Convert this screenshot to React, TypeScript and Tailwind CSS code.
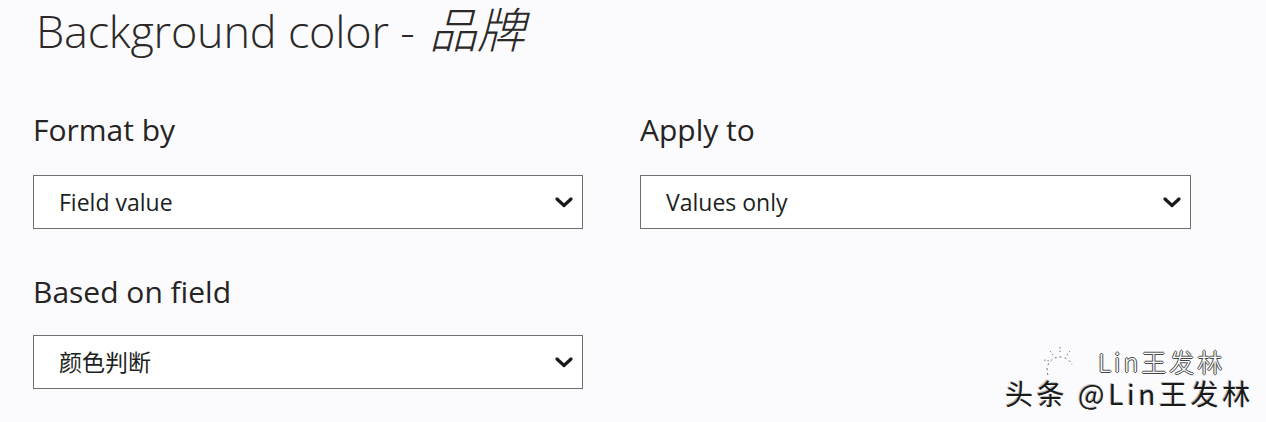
import React from "react";

function Chevron() {
  return (
    <svg width="18" height="11" viewBox="0 0 18 11" className="shrink-0">
      <polyline points="2,2 9,8.5 16,2" fill="none" stroke="#1b1a19" strokeWidth="3.2" strokeLinecap="round" strokeLinejoin="round" />
    </svg>
  );
}

function Dropdown({ value }: { value: string }) {
  return (
    <div className="h-[54px] border border-[#6f6f6f] bg-white flex items-center justify-between pl-[25px] pr-[9px]">
      <span className="text-[23px] leading-[32px] text-[#201f1e]">{value}</span>
      <Chevron />
    </div>
  );
}

export default function App() {
  return (
    <div className="relative w-[1266px] h-[422px] overflow-hidden bg-[#fbfafd] pl-[33px] font-['Segoe_UI','Open_Sans','Noto_Sans_CJK_SC',sans-serif] text-[#252423]">
      <h1 className="pl-[3px] text-[45px] leading-[62px] font-light tracking-[-0.2px] text-[#2a2928] whitespace-nowrap">
        Background color - <span className="italic text-[48px] leading-none pl-[3px] pr-[8px]">品牌</span>
      </h1>

      <div className="mt-[48px] flex gap-[57px]">
        <div className="w-[550px]">
          <div className="text-[30px] leading-[40px]">Format by</div>
          <div className="mt-[25px]">
            <Dropdown value="Field value" />
          </div>
        </div>
        <div className="w-[551px]">
          <div className="text-[30px] leading-[40px]">Apply to</div>
          <div className="mt-[25px]">
            <Dropdown value="Values only" />
          </div>
        </div>
      </div>

      <div className="mt-[43px] w-[550px]">
        <div className="text-[30px] leading-[40px]">Based on field</div>
        <div className="mt-[23px]">
          <Dropdown value="颜色判断" />
        </div>
      </div>

      {/* watermark */}
      <div className="absolute left-[1040px] top-[343px] flex items-center gap-[16px]">
        <svg width="42" height="36" viewBox="0 0 42 36">
          <path d="M8 32 A13 13 0 0 1 32 22" fill="none" stroke="#666" strokeWidth="1" strokeDasharray="2 3" />
          <path d="M20 4 L20 9 M10 8 L13 12 M30 8 L27 12 M4 17 L9 18" fill="none" stroke="#777" strokeWidth="1" strokeDasharray="1.5 2" />
        </svg>
        <span className="text-[25px] leading-[22px] tracking-[3px] text-white [text-shadow:-1px_0_0_#444,1px_0_0_#444,0_-1px_0_#444,0_1px_0_#444] font-['Noto_Sans_CJK_SC',sans-serif] font-light">
          Lin王发林
        </span>
      </div>
      <div className="absolute left-[1005px] top-[378px] text-[28px] leading-[30px] tracking-[3.6px] text-[#1a1a1a] [text-shadow:1px_1px_0_#fff,-1px_-1px_0_#bbb] font-['Noto_Sans_CJK_SC',sans-serif] whitespace-nowrap">
        头条 @Lin王发林
      </div>
    </div>
  );
}
